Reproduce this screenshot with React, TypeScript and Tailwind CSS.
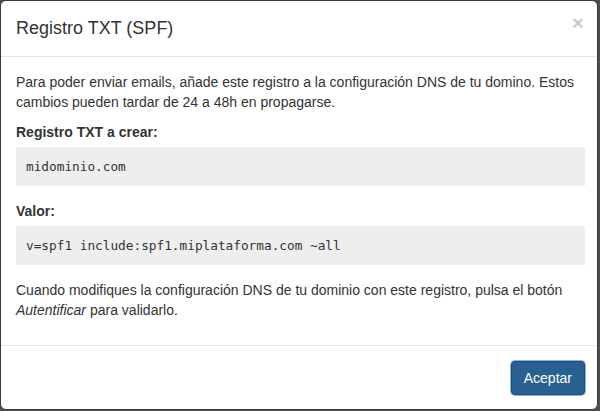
export default function App() {
    return (
        <div className="w-[600px] h-[411px] bg-[#4d4d4d] overflow-hidden font-['Liberation_Sans',Arial,sans-serif] text-[14px] leading-[20px] text-[#333]">
            <div className="w-[598px] h-[410px] bg-white border border-[#3a3a3a] rounded-[6px] flex flex-col">
                {/* Header */}
                <div className="flex items-start justify-between pl-[15px] pr-[12px] pt-[14px] pb-[15px] border-b border-[#e5e5e5]">
                    <h4 className="text-[18px] leading-[26px] font-medium">Registro TXT (SPF)</h4>
                    <button className="text-[21px] leading-none font-bold text-black opacity-20 -mt-[3px] mr-[1px]">
                        ×
                    </button>
                </div>

                {/* Body */}
                <div className="pl-[15px] pr-[12px] py-[15px]">
                    <p className="mb-[10px]">
                        Para poder enviar emails, añade este registro a la configuración DNS de tu domino. Estos
                        cambios pueden tardar de 24 a 48h en propagarse.
                    </p>

                    <div className="mb-[15px]">
                        <div className="font-bold mb-[5px]">Registro TXT a crear:</div>
                        <pre className="bg-[#eeeeee] px-[10px] py-[9.5px] font-['DejaVu_Sans_Mono',monospace] text-[12.75px] leading-[20px] text-[#333]">
                            midominio.com
                        </pre>
                    </div>

                    <div className="mb-[15px]">
                        <div className="font-bold mb-[5px]">Valor:</div>
                        <pre className="bg-[#eeeeee] px-[10px] py-[9.5px] font-['DejaVu_Sans_Mono',monospace] text-[12.75px] leading-[20px] text-[#333]">
                            v=spf1 include:spf1.miplataforma.com ~all
                        </pre>
                    </div>

                    <p className="mb-[10px]">
                        Cuando modifiques la configuración DNS de tu dominio con este registro, pulsa el botón{' '}
                        <em>Autentificar</em> para validarlo.
                    </p>
                </div>

                {/* Footer */}
                <div className="flex justify-end pl-[15px] pr-[12px] py-[15px] border-t border-[#e5e5e5]">
                    <button className="h-[34px] px-[12px] rounded-[4px] bg-[#286090] border border-[#204d74] text-white text-[14px] leading-[20px] shadow-[0_0_0_1px_#8ab4f0]">
                        Aceptar
                    </button>
                </div>
            </div>
        </div>
    );
}
